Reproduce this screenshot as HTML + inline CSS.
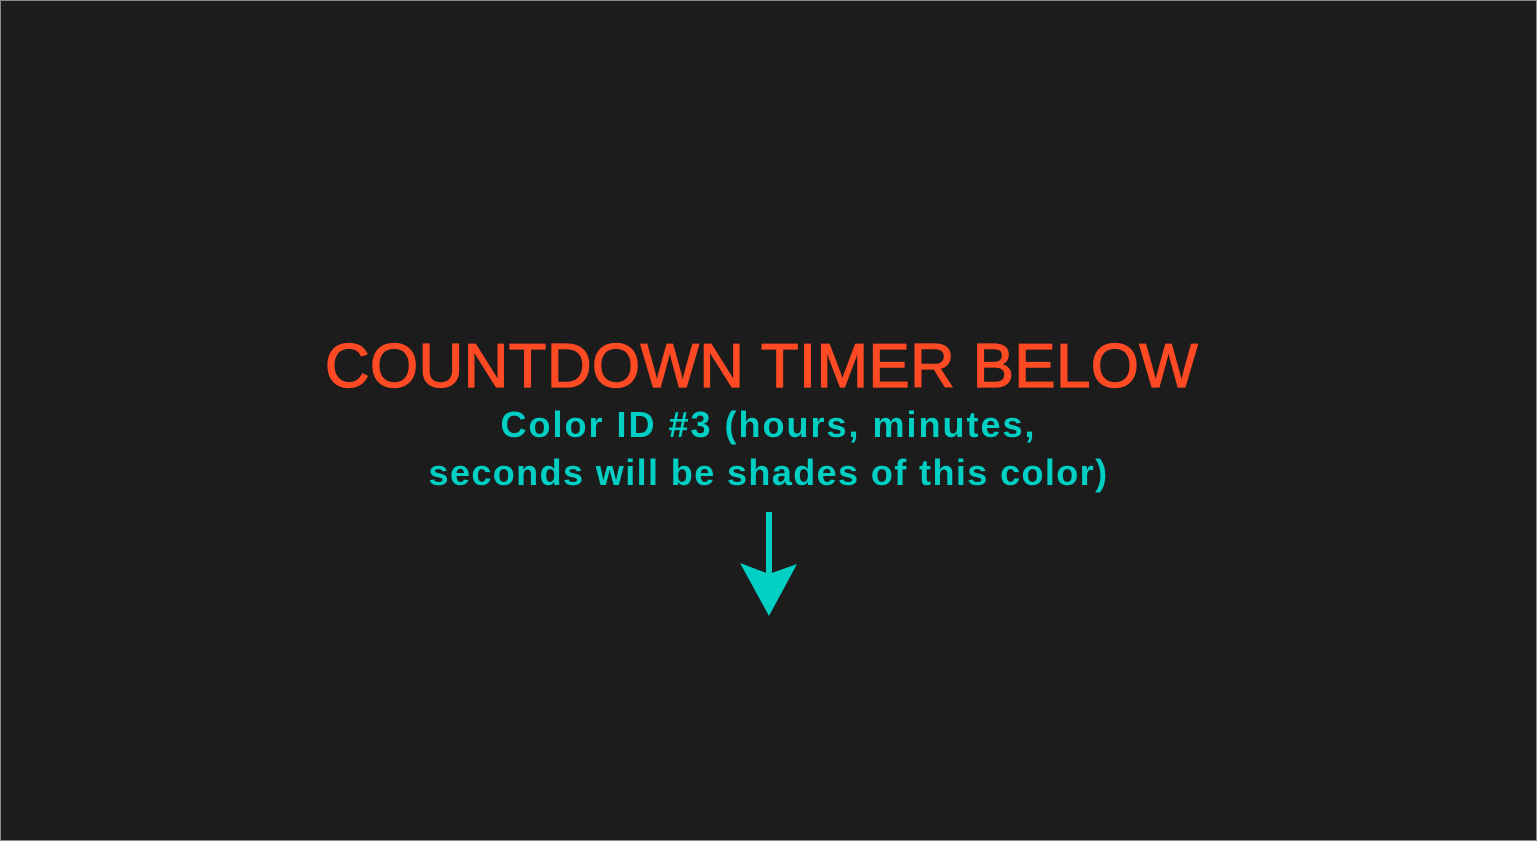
<!DOCTYPE html>
<html><head><style>
html,body{margin:0;padding:0;}
body{width:1537px;height:841px;background:#1c1c1c;position:relative;overflow:hidden;font-family:"Liberation Sans",sans-serif;}
.frame{position:absolute;left:0;top:0;width:1535px;height:839px;border:1px solid #8a8a8a;}
.t{position:absolute;left:0;width:1537px;text-align:center;white-space:nowrap;}
#h{top:332px;left:-7px;font-size:62px;color:#ff4a24;line-height:70px;letter-spacing:0.3px;-webkit-text-stroke:1.2px #ff4a24;}
#s1,#s2{font-size:36px;font-weight:bold;color:#00cfc4;line-height:40px;letter-spacing:1.4px;}
#s1{top:405px;letter-spacing:2px;}
#s2{top:453px;}
</style></head><body>
<div class="frame"></div>
<div class="t" id="h">COUNTDOWN TIMER BELOW</div>
<div class="t" id="s1">Color ID #3 (hours, minutes,</div>
<div class="t" id="s2">seconds will be shades of this color)</div>
<svg style="position:absolute;left:0;top:0" width="1537" height="841">
<rect x="766" y="512" width="6" height="65" fill="#00cfc4"/>
<path d="M740 563 L769 574 L797 564 L769 616 Z" fill="#00cfc4"/>
</svg>
</body></html>
